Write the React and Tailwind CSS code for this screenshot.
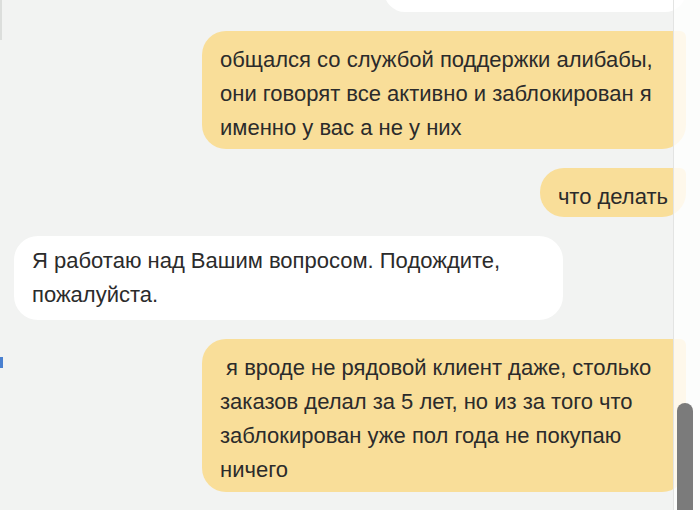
export default function App() {
  const font = { fontFamily: '"Liberation Sans", Arial, sans-serif' }

  return (
    <div className="relative h-[510px] w-[700px] overflow-hidden bg-[#f2f3f2]" style={font}>
      <div className="absolute left-0 top-0 h-[40px] w-[2px] bg-[#dcdedc]" />
      <div className="absolute left-0 top-[357px] h-[11px] w-[3px] bg-[#4a80d0]" />

      <div className="flex flex-col gap-[19px] px-[14px] text-[22px] leading-[34px] text-[#2b2b2b]">
        <div className="-mt-[30px] ml-auto h-[42px] w-[302px] rounded-[24px] bg-white" />

        <div className="ml-auto w-[484px] rounded-[24px] rounded-tr-[6px] bg-[#f9de99] px-[18px] pb-[4px] pt-[12px]">
          общался со службой поддержки алибабы,
          <br />
          они говорят все активно и заблокирован я
          <br />
          именно у вас а не у них
        </div>

        <div className="ml-auto rounded-[24px] rounded-tr-[6px] bg-[#f9de99] px-[18px] pb-[3px] pt-[12px]">что делать</div>

        <div className="mr-auto w-[549px] rounded-[24px] bg-white px-[18px] py-[8px]">
          Я работаю над Вашим вопросом. Подождите,
          <br />
          пожалуйста.
        </div>

        <div className="ml-auto w-[484px] whitespace-pre rounded-[24px] rounded-tr-[6px] bg-[#f9de99] px-[18px] pb-[5px] pt-[12px]">
          {' я вроде не рядовой клиент даже, столько'}
          <br />
          {'заказов делал за 5 лет, но из за того что'}
          <br />
          {'заблокирован уже пол года не покупаю'}
          <br />
          {'ничего'}
        </div>
      </div>

      <div className="absolute right-0 top-0 h-full w-[27px] border-l border-[#e3e4e3] bg-white/80">
        <div className="absolute left-[3px] top-[403px] h-[120px] w-[16px] rounded-full bg-[#7b7b7b]" />
      </div>
    </div>
  )
}
